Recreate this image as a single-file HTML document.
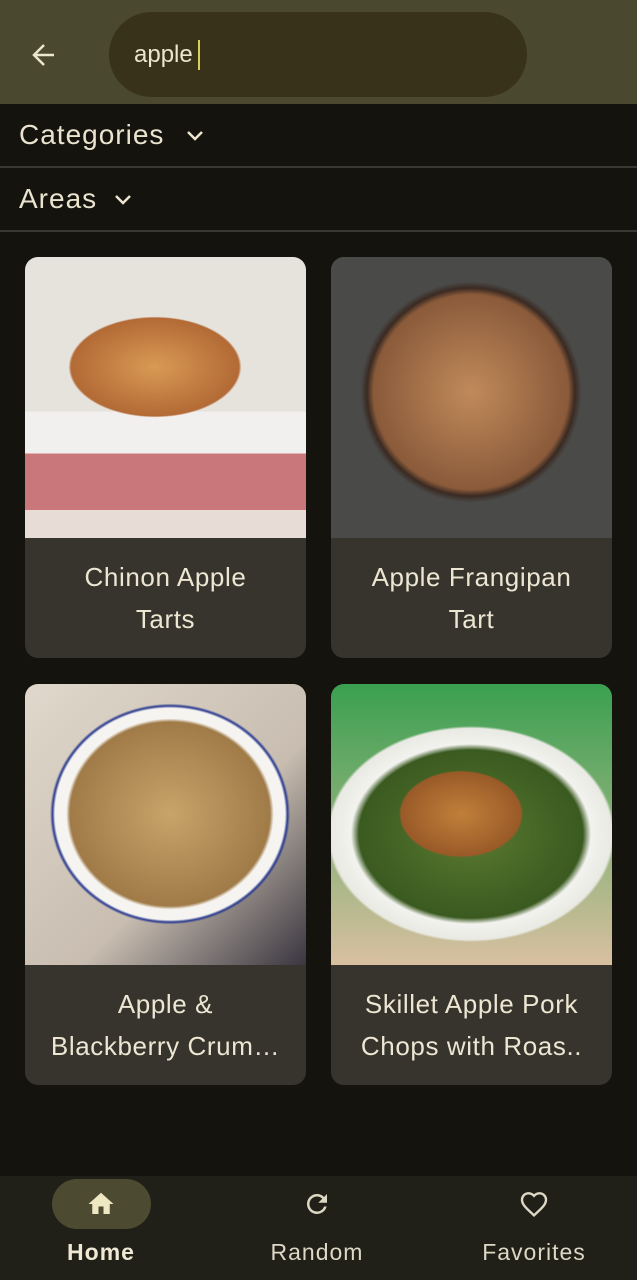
<!DOCTYPE html>
<html><head><meta charset="utf-8"><style>
*{margin:0;padding:0;box-sizing:border-box}
body{width:637px;height:1280px;background:#14130d;font-family:"Liberation Sans",sans-serif;color:#e9e3cf;position:relative;overflow:hidden}
.top{position:absolute;left:0;top:0;width:637px;height:104px;background:#4b4830}
.pill{position:absolute;left:109px;top:12px;width:418px;height:85px;border-radius:43px;background:#39321a}
.pill span{position:absolute;left:25px;top:29px;font-size:24px;color:#ece6cf}
.pill i{position:absolute;left:89px;top:28px;width:2px;height:30px;background:#d9cf5a}
.row{position:absolute;left:0;width:637px;height:64px;border-bottom:2px solid #3a3931}
.row span{position:absolute;left:19px;top:15px;font-size:28px;letter-spacing:1px}
.card{position:absolute;width:281px;height:401px;border-radius:13px;overflow:hidden;background:#36342c}
.img{height:281px}
.t{height:120px;display:flex;align-items:center;justify-content:center;text-align:center;font-size:26px;line-height:42px;letter-spacing:0.6px;white-space:nowrap;color:#ece6d3}
.nav{position:absolute;left:0;top:1176px;width:637px;height:104px;background:#201f18}
.lbl{position:absolute;top:1239px;font-size:23px;letter-spacing:1px;color:#ddd8c4;transform:translateX(-50%)}
</style></head><body>
<div class="top">
<svg style="position:absolute;left:30px;top:41px" width="28" height="28" viewBox="0 0 28 28"><path d="M24 14H5M14 4L4 14l10 10" fill="none" stroke="#ece6cf" stroke-width="2.5"/></svg>
<div class="pill"><span>apple</span><i></i></div>
</div>
<div class="row" style="top:104px"><span>Categories</span><svg style="position:absolute;left:184px;top:23px" width="22" height="16" viewBox="0 0 22 16"><path d="M4 5l7 7 7-7" fill="none" stroke="#ece6cf" stroke-width="2.5"/></svg></div>
<div class="row" style="top:168px"><span>Areas</span><svg style="position:absolute;left:112px;top:23px" width="22" height="16" viewBox="0 0 22 16"><path d="M4 5l7 7 7-7" fill="none" stroke="#ece6cf" stroke-width="2.5"/></svg></div>

<div class="card" style="left:25px;top:257px"><div class="img" style="background:radial-gradient(ellipse 120px 70px at 130px 110px,#d89a55,#b36a35 70%,transparent 72%),linear-gradient(#e6e2dc 0 55%,#f2f0ee 55% 70%,#c9777a 70% 90%,#e8dcd6 90%)"></div><div class="t">Chinon Apple<br>Tarts</div></div>
<div class="card" style="left:331px;top:257px"><div class="img" style="background:radial-gradient(circle 130px at 140px 135px,#c08a5a,#8a5a3a 75%,#3a2a22 80%,#4a4a48 85%)"></div><div class="t">Apple Frangipan<br>Tart</div></div>
<div class="card" style="left:25px;top:684px"><div class="img" style="background:radial-gradient(ellipse 125px 115px at 145px 130px,#c8a46a,#a07b48 80%,#f6f4f0 83%,#f6f4f0 92%,#2a3a90 94%,transparent 96%),linear-gradient(135deg,#e0d8cc,#c8bdb0 60%,#3a3640)"></div><div class="t">Apple &amp;<br>Blackberry Crum…</div></div>
<div class="card" style="left:331px;top:684px"><div class="img" style="background:radial-gradient(ellipse 100px 70px at 130px 130px,#c0803a,#9a5a28 60%,transparent 62%),radial-gradient(ellipse 160px 120px at 140px 150px,#5a7a30,#3a5a20 70%,#f2f2ee 75%,#eaeae4 88%,transparent 90%),linear-gradient(#3aa050,#d8c0a0)"></div><div class="t">Skillet Apple Pork<br>Chops with Roas..</div></div>

<div class="nav"></div>
<div style="position:absolute;left:52px;top:1179px;width:99px;height:50px;border-radius:25px;background:#4c4a30"></div>
<svg style="position:absolute;left:86px;top:1189px" width="30" height="30" viewBox="0 0 24 24"><path d="M10 20v-6h4v6h5v-8h3L12 3 2 12h3v8z" fill="#efe6c2"/></svg>
<svg style="position:absolute;left:302px;top:1189px" width="30" height="30" viewBox="0 0 24 24"><path d="M17.65 6.35A7.96 7.96 0 0 0 12 4a8 8 0 1 0 7.73 10h-2.08A6 6 0 1 1 12 6c1.66 0 3.140.69 4.220 1.780L13 11h7V4z" fill="#ddd8c4"/></svg>
<svg style="position:absolute;left:518px;top:1188px" width="32" height="32" viewBox="0 0 24 24"><path d="M12 20.5l-1.3-1.2C6 15 3 12.3 3 8.9 3 6.2 5.1 4 7.8 4c1.6 0 3.1.7 4.2 1.9C13.1 4.7 14.6 4 16.2 4 18.9 4 21 6.2 21 8.9c0 3.4-3 6.1-7.7 10.4z" fill="none" stroke="#ddd8c4" stroke-width="1.8"/></svg>
<div class="lbl" style="left:101px;font-weight:bold;color:#efe9d4">Home</div>
<div class="lbl" style="left:317px">Random</div>
<div class="lbl" style="left:534px">Favorites</div>
</body></html>
